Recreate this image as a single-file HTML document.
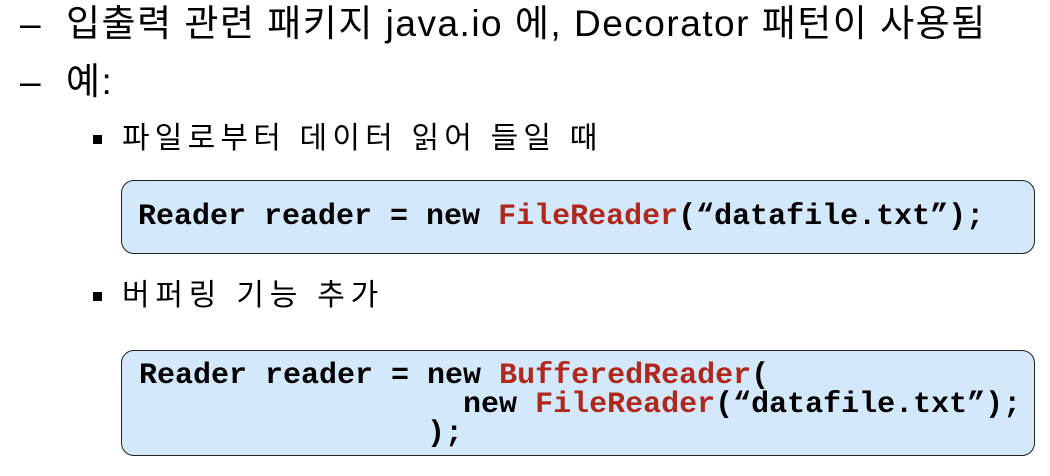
<!DOCTYPE html>
<html><head><meta charset="utf-8"><style>
body{margin:0;width:1050px;height:476px;background:#fff;position:relative;overflow:hidden;font-family:"Liberation Sans","Noto Sans CJK KR","NanumGothic",sans-serif;color:#000}
.t{position:absolute;white-space:nowrap}
.l1{font-size:37px;line-height:40px;letter-spacing:1.5px}
.l2{font-size:30px;line-height:34px;letter-spacing:5.2px}
.sq{position:absolute;width:9px;height:9px;background:#000}
.box{position:absolute;left:121px;width:912px;background:#d3e8fb;border:1.5px solid #222;border-radius:13px}
pre{margin:0;position:absolute;font-family:"Liberation Mono",monospace;font-weight:bold;font-size:30px;line-height:29px;color:#000}
.r{color:#b0281c}
</style></head><body>
<div class="t l1" style="left:20px;top:4px">–</div>
<div class="t l1" style="left:66px;top:4px">입출력 관련 패키지 java.io 에, Decorator 패턴이 사용됨</div>
<div class="t l1" style="left:20px;top:62px">–</div>
<div class="t l1" style="left:66px;top:62px">예:</div>
<div class="sq" style="left:93px;top:135px"></div>
<div class="t l2" style="left:122px;top:122px">파일로부터 데이터 읽어 들일 때</div>
<div class="box" style="top:180px;height:72px"></div>
<pre style="left:138px;top:203px">Reader reader = new <span class="r">FileReader</span>(“datafile.txt”);</pre>
<div class="sq" style="left:93px;top:292px"></div>
<div class="t l2" style="left:122px;top:279px;letter-spacing:5.8px">버퍼링 기능 추가</div>
<div class="box" style="top:350px;height:104px"></div>
<pre style="left:139px;top:362px">Reader reader = new <span class="r">BufferedReader</span>(
                  new <span class="r">FileReader</span>(“datafile.txt”);
                );</pre>
</body></html>
